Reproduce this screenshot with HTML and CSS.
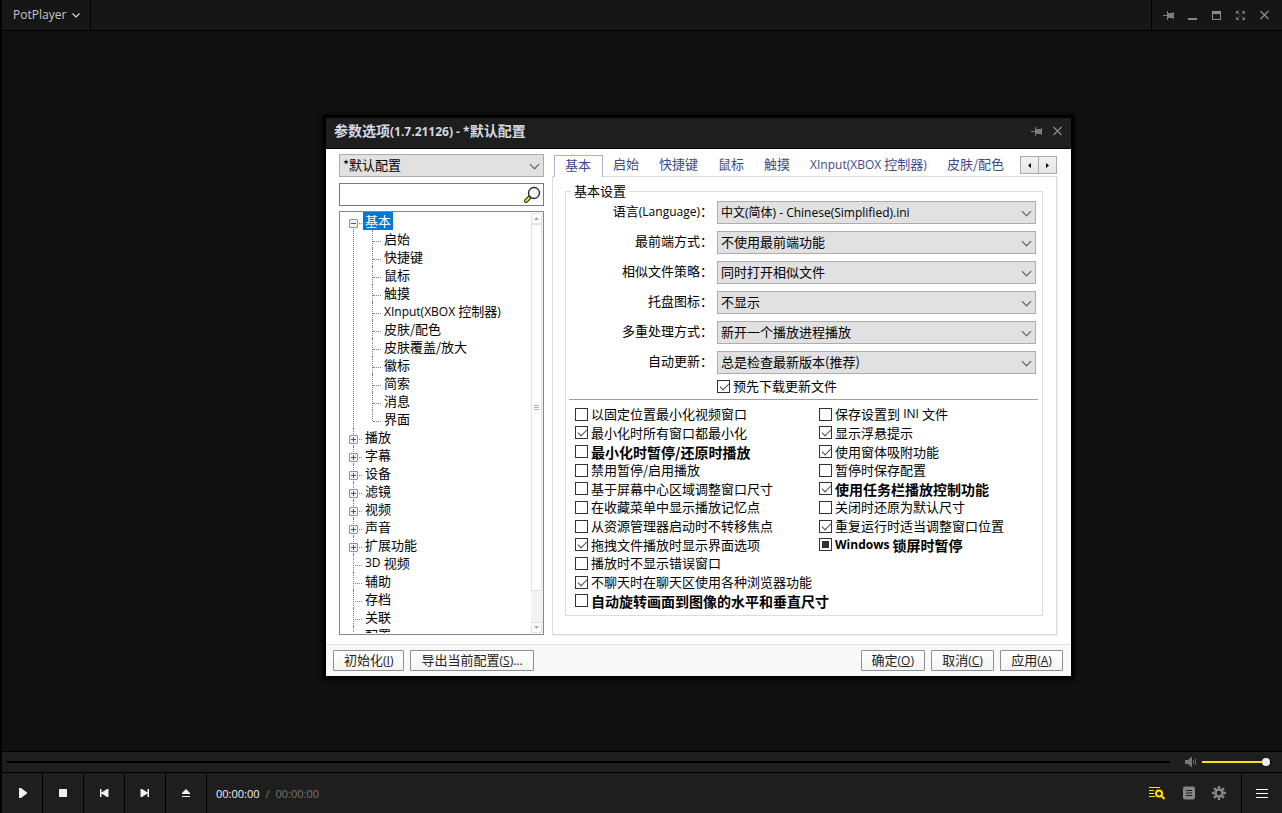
FILE: index.html
```html
<!DOCTYPE html>
<html lang="zh-CN">
<head>
<meta charset="utf-8">
<title>PotPlayer</title>
<link rel="stylesheet" href="styles.css">
</head>
<body>
<div class="player">
  <header class="topbar">
    <button class="app-menu" type="button">PotPlayer
      <svg width="8" height="5" viewBox="0 0 8 5"><path d="M.5.5 4 4 7.5.5" fill="none" stroke="#e4e4e4" stroke-width="1.1"/></svg>
    </button>
    <div class="window-buttons">
      <button type="button" aria-label="置顶"><svg width="12" height="12" viewBox="0 0 12 12"><path d="M0 6h4V2h1v2h5V3h1v7h-1V9H5v2H4V7H0z" fill="#7c7c7c"/></svg></button>
      <button type="button" aria-label="最小化"><svg width="12" height="12" viewBox="0 0 12 12"><path d="M1 9h9v2H1z" fill="#8a8a8a"/></svg></button>
      <button type="button" aria-label="最大化"><svg width="12" height="12" viewBox="0 0 12 12"><path d="M1 2h9v9H1zM2 5v5h7V5z" fill="#8a8a8a" fill-rule="evenodd"/></svg></button>
      <button type="button" aria-label="全屏"><svg width="12" height="12" viewBox="0 0 12 12"><path d="M1.500 5V2.500H4M7 2.500h2.500V5M9.500 8v2.500H7M4 10.500H1.500V8M2 3l2.500 2.500M9 3 6.500 5.500M9 10 6.500 7.500M2 10l2.500-2.500" fill="none" stroke="#7c7c7c"/></svg></button>
      <button type="button" aria-label="关闭"><svg width="12" height="12" viewBox="0 0 12 12"><path d="m1.500 2 8 8m0-8-8 8" fill="none" stroke="#8a8a8a" stroke-width="1.300"/></svg></button>
    </div>
  </header>

  <main class="stage">
    <section class="dialog" role="dialog" aria-labelledby="dlg-title">
      <header class="dialog-title">
        <h1 id="dlg-title">参数选项<span class="lt">(1.7.21126) - *</span>默认配置</h1>
        <button type="button" aria-label="固定"><svg width="12" height="12" viewBox="0 0 12 12"><path d="M0 6h4V2h1v2h5V3h1v7h-1V9H5v2H4V7H0z" fill="#7c7c7c"/></svg></button>
        <button type="button" aria-label="关闭对话框"><svg width="12" height="12" viewBox="0 0 12 12"><path d="m1.500 2 8 8m0-8-8 8" fill="none" stroke="#8a8a8a" stroke-width="1.300"/></svg></button>
      </header>

      <div class="dialog-body">
        <aside class="side">
          <div class="combo"><select aria-label="配置"><option>*默认配置</option></select></div>
          <div class="search">
            <input type="text" aria-label="搜索">
            <svg width="18" height="18" viewBox="0 0 18 18"><path d="m3 15 4-4" stroke="#222" stroke-width="4" stroke-linecap="round"/><path d="m3 15 3-3" stroke="#ffe100" stroke-width="2" stroke-linecap="round"/><circle cx="11" cy="7" r="5.500" fill="#f4f6fa" stroke="#222" stroke-width="1.300"/></svg>
          </div>
          <div class="tree-box">
            <ul class="tree">
              <li><div class="row"><button class="exp minus" type="button" aria-label="折叠"></button><span class="sel">基本</span></div>
                <ul>
                  <li>启始</li><li>快捷键</li><li>鼠标</li><li>触摸</li>
                  <li><span class="lt">XInput(XBOX </span>控制器<span class="lt">)</span></li>
                  <li>皮肤/配色</li><li>皮肤覆盖/放大</li><li>徽标</li><li>简索</li><li>消息</li><li>界面</li>
                </ul>
              </li>
              <li><div class="row"><button class="exp" type="button" aria-label="展开"></button>播放</div></li>
              <li><div class="row"><button class="exp" type="button" aria-label="展开"></button>字幕</div></li>
              <li><div class="row"><button class="exp" type="button" aria-label="展开"></button>设备</div></li>
              <li><div class="row"><button class="exp" type="button" aria-label="展开"></button>滤镜</div></li>
              <li><div class="row"><button class="exp" type="button" aria-label="展开"></button>视频</div></li>
              <li><div class="row"><button class="exp" type="button" aria-label="展开"></button>声音</div></li>
              <li><div class="row"><button class="exp" type="button" aria-label="展开"></button>扩展功能</div></li>
              <li><div class="row leaf"><span class="lt">3D </span>视频</div></li>
              <li><div class="row leaf">辅助</div></li>
              <li><div class="row leaf">存档</div></li>
              <li><div class="row leaf">关联</div></li>
              <li><div class="row leaf">配置</div></li>
            </ul>
            <div class="scrollbar">
              <span class="sb-btn"><svg width="5" height="3" viewBox="0 0 5 3"><path d="M2.500 0 5 3H0z" fill="#aaa"/></svg></span>
              <span class="sb-thumb"><i></i><i></i><i></i></span>
              <span class="sb-btn"><svg width="5" height="3" viewBox="0 0 5 3"><path d="M2.500 3 5 0H0z" fill="#aaa"/></svg></span>
            </div>
          </div>
        </aside>

        <div class="pages">
          <div class="tabs">
            <nav>
              <a class="active" href="#p1">基本</a><a href="#p2">启始</a><a href="#p3">快捷键</a><a href="#p4">鼠标</a><a href="#p5">触摸</a><a href="#p6"><span class="lt">XInput(XBOX </span>控制器<span class="lt">)</span></a><a href="#p7">皮肤/配色</a>
            </nav>
            <div class="tab-scroll">
              <button type="button" aria-label="向左"><svg width="3" height="5" viewBox="0 0 3 5"><path d="M3 0v5L0 2.500z"/></svg></button><button type="button" aria-label="向右"><svg width="3" height="5" viewBox="0 0 3 5"><path d="M0 0v5l3-2.500z"/></svg></button>
            </div>
          </div>
          <div class="page">
            <fieldset class="group">
              <legend>基本设置</legend>
              <div class="form">
                <label for="s1">语言<span class="lt">(Language)</span>：</label><div class="combo"><select id="s1" class="mixed"><option>中文(简体) - Chinese(Simplified).ini</option></select></div>
                <label for="s2">最前端方式：</label><div class="combo"><select id="s2"><option>不使用最前端功能</option></select></div>
                <label for="s3">相似文件策略：</label><div class="combo"><select id="s3"><option>同时打开相似文件</option></select></div>
                <label for="s4">托盘图标：</label><div class="combo"><select id="s4"><option>不显示</option></select></div>
                <label for="s5">多重处理方式：</label><div class="combo"><select id="s5"><option>新开一个播放进程播放</option></select></div>
                <label for="s6">自动更新：</label><div class="combo"><select id="s6"><option>总是检查最新版本(推荐)</option></select></div>
                <label class="check pre"><input type="checkbox" checked>预先下载更新文件</label>
              </div>
              <hr>
              <div class="checks">
                <div class="col">
                  <label class="check"><input type="checkbox">以固定位置最小化视频窗口</label>
                  <label class="check"><input type="checkbox" checked>最小化时所有窗口都最小化</label>
                  <label class="check strong"><input type="checkbox">最小化时暂停/还原时播放</label>
                  <label class="check"><input type="checkbox">禁用暂停/启用播放</label>
                  <label class="check"><input type="checkbox">基于屏幕中心区域调整窗口尺寸</label>
                  <label class="check"><input type="checkbox">在收藏菜单中显示播放记忆点</label>
                  <label class="check"><input type="checkbox">从资源管理器启动时不转移焦点</label>
                  <label class="check"><input type="checkbox" checked>拖拽文件播放时显示界面选项</label>
                  <label class="check"><input type="checkbox">播放时不显示错误窗口</label>
                  <label class="check"><input type="checkbox" checked>不聊天时在聊天区使用各种浏览器功能</label>
                  <label class="check strong"><input type="checkbox">自动旋转画面到图像的水平和垂直尺寸</label>
                </div>
                <div class="col">
                  <label class="check"><input type="checkbox">保存设置到<span class="lt">&nbsp;INI&nbsp;</span>文件</label>
                  <label class="check"><input type="checkbox" checked>显示浮悬提示</label>
                  <label class="check"><input type="checkbox" checked>使用窗体吸附功能</label>
                  <label class="check"><input type="checkbox">暂停时保存配置</label>
                  <label class="check strong"><input type="checkbox" checked>使用任务栏播放控制功能</label>
                  <label class="check"><input type="checkbox">关闭时还原为默认尺寸</label>
                  <label class="check"><input type="checkbox" checked>重复运行时适当调整窗口位置</label>
                  <label class="check strong"><input class="partial" type="checkbox" aria-checked="mixed"><span class="lt">Windows&nbsp;</span>锁屏时暂停</label>
                </div>
              </div>
            </fieldset>
          </div>
        </div>
      </div>

      <footer class="dialog-foot">
        <button type="button">初始化<span class="lt">(<u>I</u>)</span></button>
        <button type="button">导出当前配置<span class="lt">(<u>S</u>)...</span></button>
        <span class="spacer"></span>
        <button type="button">确定<span class="lt">(<u>O</u>)</span></button>
        <button type="button">取消<span class="lt">(<u>C</u>)</span></button>
        <button type="button">应用<span class="lt">(<u>A</u>)</span></button>
      </footer>
    </section>
  </main>

  <div class="seek-row">
    <input class="seek" type="range" value="0" aria-label="进度">
    <button class="mute" type="button" aria-label="静音"><svg width="12" height="12" viewBox="0 0 12 12"><path d="M0 4h3l4-3.500v11L3 8H0z" fill="#777"/><path d="M8.500 4v4M10.500 2.500v7" stroke="#666"/></svg></button>
    <input class="volume" type="range" value="100" aria-label="音量">
  </div>

  <footer class="controls">
    <button class="ctl" type="button" aria-label="播放"><svg width="12" height="12" viewBox="0 0 12 12"><path d="M3 1h2l6 4.500v1L5 11H3z" fill="#efefef"/></svg></button>
    <button class="ctl" type="button" aria-label="停止"><svg width="12" height="12" viewBox="0 0 12 12"><rect x="2" y="2" width="8" height="8" rx=".5" fill="#efefef"/></svg></button>
    <button class="ctl" type="button" aria-label="上一个"><svg width="12" height="12" viewBox="0 0 12 12"><path d="M2 2h1.500v3.500L9 2h1.500v8H9L3.500 6.500V10H2z" fill="#efefef"/></svg></button>
    <button class="ctl" type="button" aria-label="下一个"><svg width="12" height="12" viewBox="0 0 12 12"><path d="M10 2H8.500v3.500L3 2H1.500v8H3l5.500-3.500V10H10z" fill="#efefef"/></svg></button>
    <button class="ctl" type="button" aria-label="打开"><svg width="12" height="12" viewBox="0 0 12 12"><path d="m6 2 4 4v1H2V6zM2 9h8v1H2z" fill="#efefef"/></svg></button>
    <div class="time"><b>00:00:00</b><span>/</span><span>00:00:00</span></div>
    <div class="tools">
      <button type="button" aria-label="搜索列表"><svg width="16" height="14" viewBox="0 0 16 14"><path d="M0 1.500h11M0 4.500h5M0 7.500h5M0 10.500h6" stroke="#ffe100"/><circle cx="10" cy="7.500" r="3" fill="none" stroke="#ffe100" stroke-width="2"/><path d="m12 9.500 3.500 3.500" stroke="#ffe100" stroke-width="2"/></svg></button>
      <button type="button" aria-label="播放列表"><svg width="12" height="14" viewBox="0 0 12 14"><rect width="12" height="13" y=".5" rx="2" fill="#868686"/><path d="M3 4.500h6M3 7h6M3 9.500h6" stroke="#1e1e1e"/></svg></button>
      <button type="button" aria-label="设置"><svg width="14" height="14" viewBox="0 0 14 14"><circle cx="7" cy="7" r="3.500" fill="none" stroke="#868686" stroke-width="2.600"/><path d="M7 0v2.500M7 11.500V14M0 7h2.500M11.500 7H14M2.050 2.050l1.800 1.800M10.150 10.150l1.800 1.800M2.050 11.950l1.800-1.800M10.150 3.850l1.800-1.800" stroke="#868686" stroke-width="2.400"/></svg></button>
    </div>
    <button class="ctl menu" type="button" aria-label="菜单"><svg width="12" height="12" viewBox="0 0 12 12"><path d="M0 2.500h12M0 6.500h12M0 10.500h12" stroke="#fff"/></svg></button>
  </footer>
</div>
</body>
</html>
```
FILE: styles.css
```css
* { box-sizing: border-box; }

html, body { height: 100%; }

body {
  margin: 0;
  background: #000;
  color: #000;
  font: 13px/18px "Noto Sans CJK SC", sans-serif;
}

button, input, select {
  margin: 0;
  padding: 0;
  border: 0;
  background: none;
  color: inherit;
  font: inherit;
}

svg { display: block; flex: none; }
ul { margin: 0; padding: 0; list-style: none; }

.lt { font-family: "Open Sans", sans-serif; font-size: 12px; white-space: pre; }

.player {
  display: flex;
  flex-direction: column;
  min-height: 100vh;
  padding-left: 2px;
}

/* Title bar */
.topbar {
  display: flex;
  justify-content: space-between;
  height: 31px;
  background: #161616;
  border-bottom: 1px solid #000;
}
.app-menu {
  display: flex;
  align-items: center;
  gap: 6px;
  padding: 0 10px 0 11px;
  border-right: 1px solid #000;
  color: #c8c8c8;
  font: 12px/18px "Open Sans", sans-serif;
}
.window-buttons {
  display: flex;
  align-items: center;
  gap: 12px;
  padding: 0 11px;
  border-left: 1px solid #000;
}

.stage { position: relative; flex: 1; background: #101010; }

/* Options dialog */
.dialog {
  position: absolute;
  left: 324px;
  top: 87px;
  display: flex;
  flex-direction: column;
  width: 745px;
  background: #fff;
  box-shadow: 0 0 0 3px #000, 0 0 5px 3px #000;
}
.dialog-title {
  display: flex;
  align-items: center;
  gap: 9px;
  height: 31px;
  padding: 0 7px 4px 8px;
  background: #1e1e1e;
  border-bottom: 1px solid #000;
}
.dialog-title h1 {
  flex: 1;
  margin: 0;
  color: #d6d8e0;
  font-size: 14px;
  font-weight: 700;
}
.dialog-body {
  display: flex;
  gap: 8px;
  padding: 5px 14px 9px 13px;
}

.combo { position: relative; height: 23px; }
.combo select {
  appearance: none;
  display: block;
  width: 100%;
  height: 23px;
  padding: 0 24px 2px 3px;
  border: 1px solid #adadad;
  border-radius: 0;
  background: #e1e1e1;
}
.combo::after {
  content: "";
  position: absolute;
  right: 6px;
  top: 7px;
  width: 6px;
  height: 6px;
  border: solid #555;
  border-width: 0 1px 1px 0;
  transform: rotate(45deg);
  pointer-events: none;
}
.combo .mixed {
  padding-bottom: 0;
  font-family: "Open Sans", "Noto Sans CJK SC", sans-serif;
  font-size: 12px;
}

.side { display: flex; flex-direction: column; width: 205px; }
.search {
  display: flex;
  align-items: center;
  height: 23px;
  margin: 6px 0 5px;
  padding: 0 2px;
  border: 1px solid #7a7a7a;
}
.search input { flex: 1; min-width: 0; outline: 0; }

.tree-box {
  display: flex;
  height: 424px;
  border: 1px solid #828790;
  overflow: hidden;
}
.tree {
  flex: 1;
  height: 421px;
  padding-left: 9px;
  overflow: hidden;
}
.tree > li { position: relative; }
.tree > li::before {
  content: "";
  position: absolute;
  left: 4px;
  top: 0;
  bottom: 0;
  border-left: 1px dotted #808080;
}
.tree > li:first-child::before { top: 9px; }
.row {
  position: relative;
  display: flex;
  align-items: center;
  height: 18px;
  gap: 7px;
}
.row::before {
  content: "";
  position: absolute;
  left: 10px;
  top: 11px;
  width: 3px;
  border-top: 1px dotted #808080;
}
.leaf { padding-left: 16px; gap: 0; }
.leaf::before { left: 4px; width: 9px; }
.exp {
  position: relative;
  width: 9px;
  height: 9px;
  margin-top: 4px;
  border: 1px solid #919191;
  border-radius: 1px;
  background:
    linear-gradient(#3a559c, #3a559c) center / 5px 1px no-repeat,
    linear-gradient(#3a559c, #3a559c) center / 1px 5px no-repeat,
    #f4f4f4;
}
.exp.minus { background: linear-gradient(#3a559c, #3a559c) center / 5px 1px no-repeat, #f4f4f4; }
.sel {
  margin-left: -2px;
  padding: 0 2px;
  background: #0078d7;
  color: #fff;
}
.tree ul li {
  position: relative;
  height: 18px;
  padding-left: 35px;
}
.tree ul li::before {
  content: "";
  position: absolute;
  left: 23px;
  top: 0;
  bottom: 0;
  border-left: 1px dotted #808080;
}
.tree ul li:last-child::before { bottom: 7px; }
.tree ul li::after {
  content: "";
  position: absolute;
  left: 24px;
  top: 11px;
  width: 8px;
  border-top: 1px dotted #808080;
}

.scrollbar {
  display: flex;
  flex-direction: column;
  width: 12px;
  margin: 1px 0;
  background: #f2f2f2;
}
.sb-btn {
  display: flex;
  align-items: center;
  justify-content: center;
  height: 11px;
  margin-right: 1px;
  border: 1px solid #e2e2e2;
  background: #fff;
}
.sb-thumb {
  display: flex;
  flex-direction: column;
  align-items: center;
  justify-content: center;
  gap: 1px;
  height: 367px;
  margin: 0 1px auto 0;
  border: 1px solid #e2e2e2;
  background: #fff;
}
.sb-thumb i { width: 5px; height: 1px; background: #b0b0b0; }

/* Tabbed pages */
.pages { display: flex; flex: 1; flex-direction: column; min-width: 0; }
.tabs {
  display: flex;
  align-items: flex-start;
  justify-content: space-between;
  height: 22px;
  padding-left: 2px;
}
.tabs nav { display: flex; margin-top: 1px; white-space: nowrap; }
.tabs a {
  height: 18px;
  padding: 0 10px;
  color: #3f4a8a;
  text-decoration: none;
}
.tabs .active {
  position: relative;
  height: 22px;
  padding-right: 11px;
  border: 1px solid #a9b0d0;
  border-bottom: 0;
  background: #fff;
}
.tab-scroll { display: flex; margin-top: 2px; }
.tab-scroll button {
  display: flex;
  align-items: center;
  justify-content: center;
  width: 19px;
  height: 18px;
  border: 1px solid #acacac;
  background: linear-gradient(#f2f2f2, #e6e6e6);
}
.tab-scroll button + button { margin-left: -1px; }
.page {
  flex: 1;
  padding: 7px 13px 18px 12px;
  border: 1px solid #dcdcdc;
  box-shadow: 1px 1px 0 #f0f0f0;
}
.group {
  min-width: 0;
  height: 432px;
  margin: 0;
  padding: 0 4px 0 3px;
  border: 1px solid #dcdcdc;
}
.group legend { margin-left: 2px; padding: 0 3px; line-height: 14px; }
.form {
  display: grid;
  grid-template-columns: 143px 1fr;
  gap: 7px 4px;
  margin-top: 3px;
  padding: 0 2px 0 1px;
}
.form > label:not(.check) { text-align: right; line-height: 20px; white-space: nowrap; }
.form .pre { grid-column: 2; margin-top: -4px; }

.check { display: flex; align-items: center; height: 18px; white-space: nowrap; }
.check input {
  appearance: none;
  position: relative;
  flex: none;
  width: 13px;
  height: 13px;
  margin-right: 3px;
  border: 1px solid #333;
  background: #fff;
}
.check input:checked::after {
  content: "";
  position: absolute;
  left: 2px;
  top: 2px;
  width: 8px;
  height: 4px;
  border: solid #444;
  border-width: 0 0 1px 1px;
  transform: rotate(-45deg);
}
.check .partial {
  background: linear-gradient(#333, #333) center / 7px 7px no-repeat, #fff;
}
.strong { font-size: 14px; font-weight: 700; }

.group hr {
  height: 1px;
  margin: 4px 0 5px;
  border: 0;
  background: #a0a0a0;
}
.checks { display: grid; grid-template-columns: 244px 1fr; padding-left: 6px; }
.col { display: grid; grid-template-rows: repeat(11, 1fr); height: 205px; align-items: center; }

/* Dialog buttons */
.dialog-foot {
  display: flex;
  gap: 6px;
  padding: 5px 8px 5px 7px;
  border-top: 1px solid #dfdfdf;
  background: #f8f8f8;
}
.dialog-foot button {
  min-width: 63px;
  height: 21px;
  padding: 0 10px;
  border: 1px solid #8e8f8f;
  border-radius: 1px;
  background: linear-gradient(#fff, #f4f4f4);
  color: #222;
  line-height: 18px;
  white-space: nowrap;
}
.spacer { flex: 1; }

/* Seek bar */
.seek-row {
  display: flex;
  align-items: center;
  height: 21px;
  padding: 0 10px 0 5px;
  background: #1e1e1e;
  border-top: 1px solid #000;
}
input[type="range"] { appearance: none; display: block; height: 10px; }
.seek { flex: 1; min-width: 0; }
.seek::-webkit-slider-runnable-track { height: 2px; background: #000; }
.seek::-webkit-slider-thumb { appearance: none; width: 0; height: 0; }
.mute { margin: 0 5px 0 15px; }
.volume { width: 70px; }
.volume::-webkit-slider-runnable-track {
  height: 2px;
  padding-right: 2px;
  background: linear-gradient(90deg, #ffe100 64px, #000 64px);
}
.volume::-webkit-slider-thumb {
  appearance: none;
  width: 8px;
  height: 8px;
  margin-top: -3px;
  border-radius: 50%;
  background: #efefef;
}

/* Playback controls */
.controls {
  display: flex;
  height: 41px;
  background: #1e1e1e;
  border-top: 1px solid #000;
}
.ctl {
  display: flex;
  align-items: center;
  justify-content: center;
  width: 41px;
  border-right: 1px solid #000;
}
.ctl.menu { border-right: 0; border-left: 1px solid #000; }
.time {
  display: flex;
  flex: 1;
  align-items: center;
  gap: 6px;
  padding: 2px 0 0 9px;
  color: #777;
  font: 11px/16px "Open Sans", sans-serif;
}
.time b { color: #f0f0f0; font-weight: 400; }
.tools { display: flex; align-items: center; gap: 17px; padding-right: 15px; }
.tools button:first-child { margin-right: 1px; }
```
